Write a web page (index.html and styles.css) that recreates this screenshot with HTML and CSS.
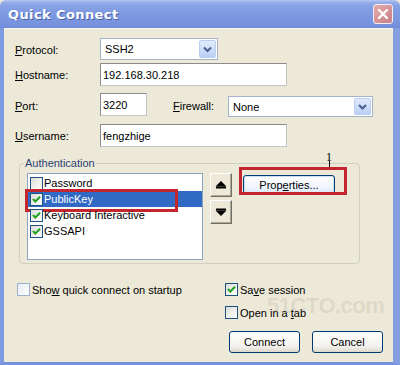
FILE: index.html
```html
<!DOCTYPE html>
<html>
<head>
<meta charset="utf-8">
<link rel="stylesheet" href="styles.css">
</head>
<body>
<div class="window">
  <div class="titlebar">
    <span class="title">Quick Connect</span>
    <span class="close"><svg width="14" height="14" viewBox="0 0 14 14"><path d="M3 3 L11 11 M11 3 L3 11" stroke="#fff" stroke-width="2.4" stroke-linecap="round"/></svg></span>
  </div>
  <div class="frame">
    <div class="watermark">51CTO.com</div>
    <div class="row r1">
      <span class="lbl"><u>P</u>rotocol:</span>
      <div class="select w-proto"><span class="val">SSH2</span><span class="drop"><svg width="15" height="16" viewBox="0 0 15 16"><path d="M4 6.5 L7.5 10 L11 6.5" fill="none" stroke="#4a5f8c" stroke-width="2"/></svg></span></div>
    </div>
    <div class="row r2">
      <span class="lbl"><u>H</u>ostname:</span>
      <div class="field w-host">192.168.30.218</div>
    </div>
    <div class="row r3">
      <span class="lbl"><u>P</u>ort:</span>
      <div class="field w-port">3220</div>
      <span class="lbl lbl-fw"><u>F</u>irewall:</span>
      <div class="select w-fw"><span class="val">None</span><span class="drop"><svg width="15" height="15" viewBox="0 0 15 15"><path d="M4 6 L7.5 9.5 L11 6" fill="none" stroke="#4a5f8c" stroke-width="2"/></svg></span></div>
    </div>
    <div class="row r4">
      <span class="lbl"><u>U</u>sername:</span>
      <div class="field w-host">fengzhige</div>
    </div>

    <fieldset class="group">
      <legend>Authentication</legend>
      <div class="list">
        <div class="item"><span class="cb"></span><span class="txt">Password</span></div>
        <div class="item sel"><span class="cb"><svg width="11" height="11" viewBox="0 0 11 11"><path d="M2 5 L4.3 7.5 L9 2.8" fill="none" stroke="#21a121" stroke-width="2"/></svg></span><span class="txt">PublicKey</span><span class="annot annot-pk"></span></div>
        <div class="item"><span class="cb"><svg width="11" height="11" viewBox="0 0 11 11"><path d="M2 5 L4.3 7.5 L9 2.8" fill="none" stroke="#21a121" stroke-width="2"/></svg></span><span class="txt">Keyboard Interactive</span></div>
        <div class="item"><span class="cb"><svg width="11" height="11" viewBox="0 0 11 11"><path d="M2 5 L4.3 7.5 L9 2.8" fill="none" stroke="#21a121" stroke-width="2"/></svg></span><span class="txt">GSSAPI</span></div>
      </div>
      <div class="arrows">
        <div class="abtn"><svg width="12" height="10" viewBox="0 0 12 10"><path d="M0.5 6.5 L6 1 L11.5 6.5 Z" fill="#000"/><rect x="1" y="6.5" width="10" height="2" fill="#000"/></svg></div>
        <div class="abtn"><svg width="12" height="10" viewBox="0 0 12 10"><rect x="1" y="1.5" width="10" height="2" fill="#000"/><path d="M0.5 3.5 L6 9 L11.5 3.5 Z" fill="#000"/></svg></div>
      </div>
      <div class="props-wrap">
        <div class="btn props">Prop<u>e</u>rties...</div>
        <span class="annot annot-pr"><span class="one">1</span><span class="one-line"></span></span>
      </div>
    </fieldset>

    <div class="bottom">
      <div class="leftcol">
        <div class="chk"><span class="cb light"></span><span class="ctxt">Sho<u>w</u> quick connect on startup</span></div>
      </div>
      <div class="rightcol">
        <div class="chk"><span class="cb"><svg width="11" height="11" viewBox="0 0 11 11"><path d="M2 5 L4.3 7.5 L9 2.8" fill="none" stroke="#21a121" stroke-width="2"/></svg></span><span class="ctxt">Sa<u>v</u>e session</span></div>
        <div class="chk r-open"><span class="cb"></span><span class="ctxt">Open in a <u>t</u>ab</span></div>
        <div class="buttons">
          <div class="btn dlg">Connect</div>
          <div class="btn dlg">Cancel</div>
        </div>
      </div>
    </div>
  </div>
</div>
</body>
</html>
```
FILE: styles.css
```css
html, body {
  margin: 0;
  padding: 0;
}
body {
  width: 400px;
  height: 365px;
  overflow: hidden;
  font-family: "Liberation Sans", Arial, sans-serif;
  font-size: 11px;
  color: #000;
  background: #ECE9D8;
}
.window {
  width: 400px;
  height: 365px;
  display: flex;
  flex-direction: column;
}
.titlebar {
  height: 28px;
  flex: none;
  box-sizing: border-box;
  display: flex;
  align-items: center;
  padding: 0 7px 0 8px;
  border-radius: 6px 6px 0 0;
  background: linear-gradient(to bottom, #b7c8f1 0px, #9ab0eb 2px, #86a1e5 6px, #7c98e0 16px, #7893de 24px, #7089d6 28px);
}
.title {
  flex: 1;
  color: #fff;
  font: bold 13px "DejaVu Sans", sans-serif;
  letter-spacing: 0.4px;
  text-shadow: 1px 1px 0 #4a5fa8;
  padding-top: 1px;
}
.close {
  width: 20px;
  height: 20px;
  box-sizing: border-box;
  border: 1px solid #f2eef2;
  border-radius: 3px;
  background: linear-gradient(135deg, #e6abab, #c77f86);
  display: flex;
  align-items: center;
  justify-content: center;
}
.frame {
  flex: 1;
  position: relative;
  box-sizing: border-box;
  border-left: 4px solid #7f9be0;
  border-right: 7px solid #839fe0;
  border-bottom: 3px solid #7591dc;
  box-shadow: inset 0 1px 0 #f7f6ef;
  background: #ECE9D8;
  padding: 10px 0 0 11px;
}
.watermark {
  position: absolute;
  left: 263px;
  top: 265px;
  font: bold 22px "Liberation Sans", sans-serif;
  letter-spacing: -0.5px;
  color: rgba(140, 128, 110, 0.16);
  pointer-events: none;
}
.row {
  display: flex;
  align-items: center;
}
.lbl {
  width: 85px;
  flex: none;
  padding-top: 1px;
}
.r1 { height: 22px; }
.r2 { height: 23px; margin-top: 3px; }
.r3 { height: 24px; margin-top: 7px; }
.r4 { height: 23px; margin-top: 7px; }
.lbl-fw {
  width: 55px;
  margin-left: 26px;
}
.field {
  height: 23px;
  box-sizing: border-box;
  border: 1px solid;
  border-color: #8c8c8c #c4c4c4 #c4c4c4 #8c8c8c;
  background: #fff;
  padding-left: 2px;
  display: flex;
  align-items: center;
}
.w-host { width: 187px; }
.w-port { width: 47px; align-self: flex-start; }
.select {
  display: flex;
  box-sizing: border-box;
  border: 1px solid #a4b4cc;
  background: #fff;
  padding: 1px;
}
.w-proto { width: 118px; height: 22px; }
.w-fw { width: 145px; height: 21px; align-self: flex-end; }
.val {
  flex: 1;
  display: flex;
  align-items: center;
  padding-left: 3px;
}
.drop {
  width: 17px;
  box-sizing: border-box;
  border: 1px solid #bccdf0;
  border-radius: 2px;
  background: linear-gradient(to bottom, #e2ebfc, #bacff6);
  display: flex;
  align-items: center;
  justify-content: center;
}
.group {
  margin: 10px 0 0 4px;
  width: 341px;
  height: 107px;
  box-sizing: border-box;
  border: 1px solid #d0d0bf;
  border-radius: 4px;
  padding: 3px 0 0 7px;
  min-inline-size: 0;
  display: flex;
  align-items: flex-start;
}
.group legend {
  margin-left: -3px;
  padding: 0 1px;
  color: #2c3f74;
  line-height: 13px;
}
.list {
  width: 176px;
  height: 87px;
  flex: none;
  box-sizing: border-box;
  border: 1px solid #8ea3bf;
  background: #fff;
  padding-top: 1px;
}
.item {
  position: relative;
  height: 16px;
  display: flex;
  align-items: center;
  padding-left: 2px;
}
.item.sel {
  background: #316AC5;
  color: #fff;
}
.txt { margin-left: 1px; }
.cb {
  width: 13px;
  height: 13px;
  flex: none;
  box-sizing: border-box;
  border: 1px solid #1c5180;
  background: linear-gradient(135deg, #dcdcd7, #ffffff);
  display: flex;
  align-items: center;
  justify-content: center;
}
.cb.light {
  border-color: #9db0cf;
  background: linear-gradient(135deg, #e4ecf4, #ffffff);
}
.annot {
  position: absolute;
  box-sizing: border-box;
  border: 3px solid #c3262d;
  pointer-events: none;
}
.annot-pk {
  left: -3px;
  top: -2px;
  width: 153px;
  height: 23px;
}
.arrows {
  margin-left: 7px;
  display: flex;
  flex-direction: column;
  gap: 3px;
}
.abtn {
  width: 22px;
  height: 24px;
  box-sizing: border-box;
  background: #ECE9D8;
  border: 1px solid;
  border-color: #ffffff #716f64 #716f64 #ffffff;
  box-shadow: inset -1px -1px 0 #aca899;
  display: flex;
  align-items: center;
  justify-content: center;
}
.props-wrap {
  position: relative;
  margin-left: 11px;
  margin-top: 2px;
}
.btn {
  box-sizing: border-box;
  border: 1px solid #003c74;
  border-radius: 3px;
  background: linear-gradient(to bottom, #ffffff, #f3f2ee 70%, #dcd8cc);
  display: flex;
  align-items: center;
  justify-content: center;
}
.props {
  width: 92px;
  height: 19px;
  background: linear-gradient(to bottom, #ffffff, #eef4fd 70%, #d9e6f8);
  box-shadow: inset 0 0 0 1px #cddcf5;
}
.annot-pr {
  left: -4px;
  top: -8px;
  width: 108px;
  height: 28px;
}
.one {
  position: absolute;
  left: 84px;
  top: -20px;
  font: 12px "Liberation Serif", serif;
  color: #000;
}
.one-line {
  position: absolute;
  left: 87px;
  top: -9px;
  width: 1px;
  height: 6px;
  background: #000;
}
.bottom {
  display: flex;
  margin-top: 19px;
}
.leftcol {
  width: 210px;
  padding-left: 2px;
  box-sizing: border-box;
}
.rightcol {
  display: flex;
  flex-direction: column;
}
.chk {
  height: 13px;
  display: flex;
  align-items: center;
}
.ctxt { margin-left: 2px; }
.r-open { margin-top: 10px; }
.buttons {
  display: flex;
  gap: 12px;
  margin-top: 12px;
  margin-left: 4px;
}
.dlg {
  width: 71px;
  height: 22px;
}
```
